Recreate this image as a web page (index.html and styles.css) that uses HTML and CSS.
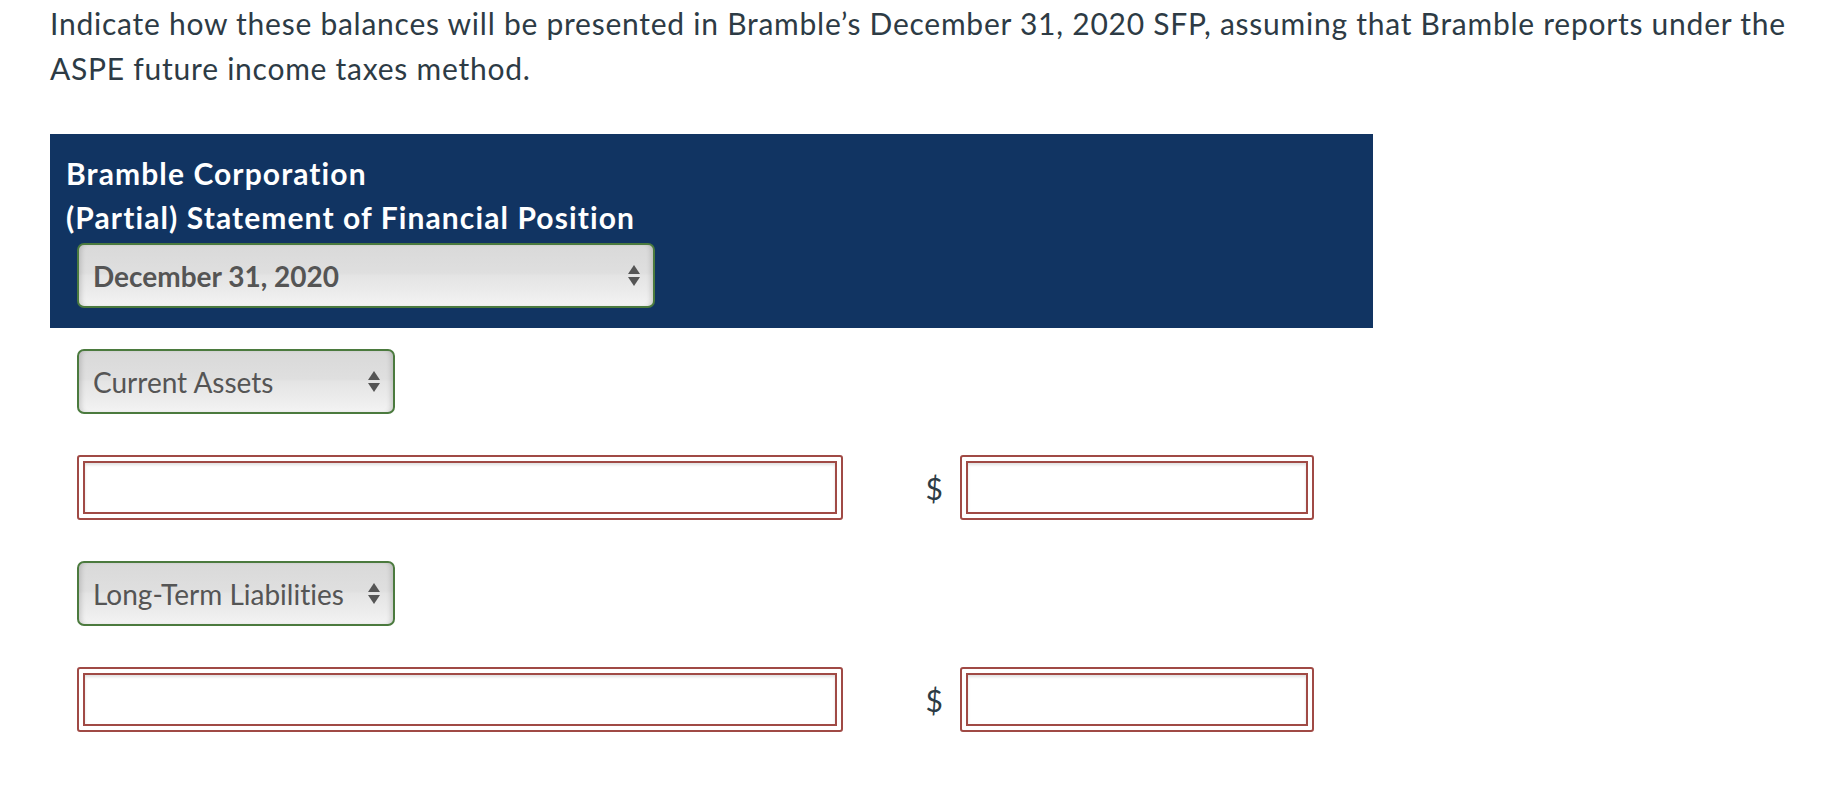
FILE: index.html
```html
<!DOCTYPE html>
<html lang="en">
<head>
<meta charset="utf-8">
<title>Bramble Corporation</title>
<link rel="stylesheet" href="styles.css">
</head>
<body>
<div class="page">
  <p class="question">Indicate how these balances will be presented in Bramble’s December 31, 2020 SFP, assuming that Bramble reports under the ASPE future income taxes method.</p>

  <div class="statement">
    <div class="statement-head">
      <div class="head-line">Bramble Corporation</div>
      <div class="head-line">(Partial) Statement of Financial Position</div>
      <div class="select select-date">
        <span class="select-text">December 31, 2020</span>
        <span class="arrows"><span class="up"></span><span class="down"></span></span>
      </div>
    </div>

    <div class="statement-body">
      <div class="select select-cat">
        <span class="select-text">Current Assets</span>
        <span class="arrows"><span class="up"></span><span class="down"></span></span>
      </div>

      <div class="entry-row">
        <span class="field field-wide"><span class="field-inner"></span></span>
        <span class="currency">$</span>
        <span class="field field-amount"><span class="field-inner"></span></span>
      </div>

      <div class="select select-cat">
        <span class="select-text">Long-Term Liabilities</span>
        <span class="arrows"><span class="up"></span><span class="down"></span></span>
      </div>

      <div class="entry-row">
        <span class="field field-wide"><span class="field-inner"></span></span>
        <span class="currency">$</span>
        <span class="field field-amount"><span class="field-inner"></span></span>
      </div>
    </div>
  </div>
</div>
</body>
</html>
```

FILE: styles.css
```css
html, body {
  margin: 0;
  padding: 0;
  background: #ffffff;
}

body {
  font-family: "Lato", "Liberation Sans", sans-serif;
  color: #2d3b45;
  font-variant-ligatures: none;
}

.page {
  padding: 1px 0 0 50px;
}

.question {
  margin: 0;
  width: 1775px;
  font-size: 30px;
  letter-spacing: 0.75px;
  line-height: 45px;
  color: #2d3b45;
}

.statement {
  margin-top: 43px;
}

.statement-head {
  width: 1323px;
  box-sizing: border-box;
  background: #113462;
  padding: 17px 0 20px 16px;
  color: #ffffff;
}

.head-line {
  font-size: 30px;
  letter-spacing: 1.1px;
  font-weight: 700;
  line-height: 44px;
}

.select {
  box-sizing: border-box;
  height: 65px;
  display: flex;
  align-items: center;
  justify-content: space-between;
  border: 2px solid #4b7a3e;
  border-radius: 7px;
  padding: 0 13px 0 14px;
  background: linear-gradient(to bottom, #d9d9d9 0%, #dfdfdf 46%, #e4e4e4 50%, #ebebeb 75%, #f3f3f3 100%);
  box-shadow: inset 5px 0 5px -3px rgba(0, 0, 0, 0.16), inset -5px 0 5px -3px rgba(0, 0, 0, 0.16);
  color: #555555;
  font-size: 28px;
}

.select-date {
  width: 578px;
  margin: 4px 0 0 11px;
  font-weight: 700;
}

.select-cat {
  width: 318px;
  margin-left: 27px;
}

.select-text {
  white-space: nowrap;
}

.arrows {
  display: flex;
  flex-direction: column;
  align-items: center;
  gap: 3px;
}

.arrows .up {
  width: 0;
  height: 0;
  border-left: 6px solid transparent;
  border-right: 6px solid transparent;
  border-bottom: 9px solid #555555;
}

.arrows .down {
  width: 0;
  height: 0;
  border-left: 6px solid transparent;
  border-right: 6px solid transparent;
  border-top: 9px solid #555555;
}

.statement-body {
  padding-top: 21px;
  display: flex;
  flex-direction: column;
  gap: 41px;
}

.entry-row {
  display: flex;
  align-items: center;
  margin-left: 27px;
  height: 65px;
}

.field {
  box-sizing: border-box;
  height: 65px;
  display: flex;
  border: 2px solid #a04a45;
  border-radius: 3px;
  padding: 4px;
  background: #ffffff;
}

.field-inner {
  flex: 1;
  border: 2px solid #a04a45;
  box-shadow: inset 0 2px 3px rgba(0, 0, 0, 0.12);
  background: #ffffff;
}

.field-wide {
  width: 766px;
}

.field-amount {
  width: 354px;
}

.currency {
  width: 117px;
  box-sizing: border-box;
  padding-right: 17px;
  text-align: right;
  font-size: 30px;
  color: #2d3b45;
}
```
